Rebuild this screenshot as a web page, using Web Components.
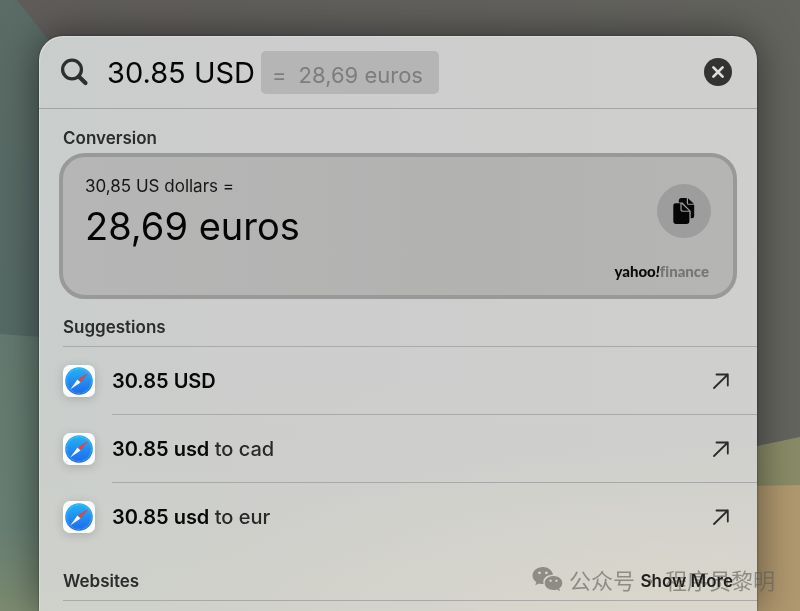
<!DOCTYPE html>
<html lang="en">
<head>
<meta charset="utf-8">
<meta name="viewport" content="width=device-width, initial-scale=1">
<title>Search</title>
<style>
  html, body { margin: 0; height: 100%; }
  body { font-family: Inter, "Noto Sans CJK SC", sans-serif; color: #1e1e1e; background: #55544f; overflow: hidden; }
</style>
</head>
<body>
<spot-desktop>
  <spot-panel>
    <search-bar slot="bar" value="30.85 USD" hint="28,69 euros"></search-bar>
    <section-title>Conversion</section-title>
    <conversion-card from="30,85 US dollars =" to="28,69 euros"></conversion-card>
    <section-title lined>Suggestions</section-title>
    <suggestion-row><b>30.85 USD</b></suggestion-row>
    <suggestion-row><b>30.85 usd</b> to cad</suggestion-row>
    <suggestion-row><b>30.85 usd</b> to eur</suggestion-row>
    <section-title lined action="Show More">Websites</section-title>
  </spot-panel>
  <channel-mark slot="mark"></channel-mark>
</spot-desktop>

<script>
const attach = (el, html) => { el.attachShadow({ mode: "open" }).innerHTML = html; };

customElements.define("spot-desktop", class extends HTMLElement {
  connectedCallback() {
    attach(this, `
      <style>
        :host { display: grid; position: relative; min-height: 100vh; box-sizing: border-box; padding: 36px 43px 0 39px; overflow: hidden; }
        .wall { position: absolute; inset: 0; width: 100%; height: 100%; }
      </style>
      <svg class="wall" viewBox="0 0 800 611" preserveAspectRatio="none" aria-hidden="true">
        <defs>
          <linearGradient id="grey" x1="0" x2="1"><stop offset="0" stop-color="#5f5c5a"/><stop offset="1" stop-color="#64645f"/></linearGradient>
          <linearGradient id="teal" x1="0" y1="0" x2="0" y2="1"><stop offset="0" stop-color="#5b6b65"/><stop offset="1" stop-color="#566a65"/></linearGradient>
          <linearGradient id="green" x1="0" y1="0" x2="0" y2="1"><stop offset="0" stop-color="#647a70"/><stop offset=".7" stop-color="#687f73"/><stop offset="1" stop-color="#7c8b70"/></linearGradient>
          <linearGradient id="olive" x1="0" y1="0" x2="0" y2="1"><stop offset="0" stop-color="#8a8c68"/><stop offset="1" stop-color="#898a63"/></linearGradient>
        </defs>
        <rect width="800" height="611" fill="url(#grey)"/>
        <path d="M0 0H17L80 80V340L0 335Z" fill="url(#teal)"/>
        <path d="M0 334L80 340V611H0Z" fill="url(#green)"/>
        <path d="M700 458L800 437V611H700Z" fill="url(#olive)"/>
        <path d="M700 487L800 485V611H700Z" fill="#b0986f"/>
      </svg>
      <slot></slot><slot name="mark"></slot>`);
  }
});

customElements.define("spot-panel", class extends HTMLElement {
  connectedCallback() {
    attach(this, `
      <style>
        :host { display: flex; flex-direction: column; position: relative; border-radius: 24px 24px 0 0; overflow: hidden;
          background: radial-gradient(ellipse 80% 34% at 95% 105%, rgba(218,214,204,.95) 20%, rgba(218,214,204,0) 100%),
            linear-gradient(to bottom, rgba(207,209,202,0) 60%, rgba(207,209,202,.9) 100%),
            linear-gradient(to right, #c9cecc 0, #cdcdcd 30%, #cfcfce 100%);
          box-shadow: 0 0 40px rgba(0,0,0,.5), 0 0 2px rgba(0,0,0,.5), inset 1px 1px 1px rgba(255,255,255,.3); }
        main { display: flex; flex-direction: column; padding-left: 24px; padding-top: 8px; }
      </style>
      <slot name="bar"></slot><main><slot></slot></main>`);
  }
});

customElements.define("search-bar", class extends HTMLElement {
  connectedCallback() {
    attach(this, `
      <style>
        :host { display: flex; align-items: center; height: 72px; padding: 0 24px 0 21px; border-bottom: 1px solid #a3a4a3; }
        .lens { width: 30px; height: 30px; flex: none; margin-right: 17px; }
        input { field-sizing: content; min-width: 0; border: 0; padding: 2px 0 0; margin: 0; outline: 0; background: none; font: 400 29px/40px Inter, sans-serif; color: #060606; }
        output { display: flex; gap: 12px; margin-left: 6px; padding: 4px 16px 0 11px; height: 39px; border-radius: 5px; background: #b4b5b4; color: #7c7d7c; font: 400 22px/40px Inter, sans-serif; white-space: pre; }
        button { margin-left: auto; border: 0; padding: 0; width: 30px; height: 30px; background: none; flex: none; }
        button svg { display: block; }
      </style>
      <svg class="lens" viewBox="0 0 30 30" fill="none" stroke="#2e3030" aria-hidden="true"><circle cx="12" cy="12.500" r="9.400" stroke-width="3.300"/><path d="M18.800 19.500L25.500 26" stroke-width="4.200" stroke-linecap="round"/></svg>
      <input type="text" aria-label="Search" spellcheck="false">
      <output><span>=</span><span>${this.getAttribute("hint")}</span></output>
      <button type="button" aria-label="Clear search"><svg width="30" height="30" viewBox="0 0 30 30" aria-hidden="true"><circle cx="15" cy="15" r="14" fill="#333332"/><path d="M10.400 10.400L19.600 19.600M19.600 10.400L10.400 19.600" stroke="#dededc" stroke-width="2.700" stroke-linecap="round"/></svg></button>`);
    this.shadowRoot.querySelector("input").value = this.getAttribute("value");
  }
});

customElements.define("section-title", class extends HTMLElement {
  connectedCallback() {
    const action = this.getAttribute("action");
    attach(this, `
      <style>
        :host { display: flex; align-items: center; justify-content: space-between; box-sizing: border-box; height: 36px; padding-top: 6px; padding-right: 24px; }
        :host([lined]) { height: 48px; padding-top: 8px; border-bottom: 1px solid #a9aaa8; }
        :host([action]) { height: 50px; padding-top: 10px; }
        h2, button { margin: 0; font: 600 17px/24px Inter, sans-serif; color: #2b2c2c; }
        button { border: 0; padding: 0; background: none; color: #1f1f1d; }
      </style>
      <h2><slot></slot></h2>${action ? `<button type="button">${action}</button>` : ""}`);
  }
});

customElements.define("conversion-card", class extends HTMLElement {
  connectedCallback() {
    attach(this, `
      <style>
        :host { display: flex; justify-content: space-between; box-sizing: border-box; min-height: 146px; margin: 0 20px 0 -4px; padding: 17px 22px 15px; border: 4px solid #989998; border-radius: 26px; background: linear-gradient(to right, #b5b6b5, #b2b2b1 60%, #b5b5b4); }
        p { margin: 0; color: #161616; font-size: 17px; line-height: 24px; }
        p + p { color: #050505; font-size: 38px; line-height: 56px; }
        .side { display: flex; flex-direction: column; align-items: flex-end; justify-content: space-between; padding-top: 10px; }
        button { width: 54px; height: 54px; border: 0; border-radius: 50%; padding: 0; background: #9c9d9c; display: grid; place-items: center; }
        a { font: 900 15px/18px Lato, sans-serif; color: #0b0b0b; text-decoration: none; display: flex; padding-right: 2px; }
        i { font-weight: 900; } span { color: #747574; font-variant-ligatures: none; }
      </style>
      <div><p>${this.getAttribute("from")}</p><p>${this.getAttribute("to")}</p></div>
      <div class="side">
        <button type="button" aria-label="Copy"><svg width="26" height="28" viewBox="0 0 26 28" aria-hidden="true">
          <path d="M10 1H15.800V6.300Q15.800 7.800 17.300 7.800H23.200V19Q23.200 21.300 21 21.300H19.700V14L11.500 5.500H7.800V3.500Q7.800 1 10 1Z" fill="#060606"/>
          <path d="M17 1.200L22.900 6.700H17Z" fill="#060606"/>
          <path d="M4.500 6.200H9.400V12.800Q9.400 14.800 11.500 14.800H18.400V24Q18.400 27 15.500 27H5.200Q2.300 27 2.300 24V8.500Q2.300 6.200 4.500 6.200Z" fill="#060606"/>
          <path d="M10.600 6.700L18 13.700H12Q10.600 13.700 10.600 12.300Z" fill="#060606"/>
        </svg></button>
        <a href="#finance">yahoo<i>!</i><span>finance</span></a>
      </div>`);
  }
});

customElements.define("suggestion-row", class extends HTMLElement {
  connectedCallback() {
    attach(this, `
      <style>
        :host { display: flex; }
        a { flex: 1; display: flex; align-items: center; color: #292929; text-decoration: none; }
        .app { width: 32px; height: 32px; margin-right: 17px; flex: none; overflow: visible; filter: drop-shadow(0 2px 5px rgba(0,0,0,.16)); }
        .text { flex: 1; display: flex; align-items: center; justify-content: space-between; height: 67px; padding-right: 28px; border-bottom: 1px solid #a9aaa8; font: 500 20px/28px Inter, sans-serif; }
        :host(:nth-of-type(3)) .text { border-bottom-color: transparent; }
        ::slotted(b) { font-weight: 600; color: #080808; }
      </style>
      <a href="#search">
        <svg class="app" viewBox="0 0 32 32" aria-hidden="true">
          <defs><linearGradient id="sea" x1="0" y1="0" x2="0" y2="1"><stop offset="0" stop-color="#22b6f3"/><stop offset="1" stop-color="#1d67ee"/></linearGradient></defs>
          <rect width="32" height="32" rx="7" fill="#fdfdfd"/>
          <circle cx="16" cy="16" r="13.800" fill="url(#sea)"/>
          <circle cx="16" cy="16" r="12.300" fill="none" stroke="#9adcff" stroke-opacity=".45" stroke-width="1.300" stroke-dasharray=".6 .7"/>
          <path d="M25 8L17.500 17.600L14.500 14.400Z" fill="#e5443d"/>
          <path d="M7.200 24.400L14.500 14.400L17.500 17.600Z" fill="#f7f9fb"/>
        </svg>
        <span class="text"><span><slot></slot></span>
          <svg width="16" height="16" viewBox="0 0 16 16" fill="none" stroke="#2b2b2a" stroke-width="1.800" stroke-linecap="round" stroke-linejoin="round" aria-hidden="true"><path d="M1 15L14.800 1.500M3.500 1.500H14.800V12.500"/></svg>
        </span>
      </a>`);
  }
});

customElements.define("channel-mark", class extends HTMLElement {
  connectedCallback() {
    attach(this, `
      <style>
        :host { position: absolute; right: 25px; bottom: 16px; display: flex; align-items: center; color: #5c5b55; opacity: .6; mix-blend-mode: darken; font: 400 22px/32px "Noto Sans CJK SC", sans-serif; pointer-events: none; }
        svg { display: block; margin-right: 6px; }
        .dot { margin: 0 4px; }
      </style>
      <svg width="31" height="26" viewBox="0 0 31 26" aria-hidden="true">
        <path fill="currentColor" fill-rule="evenodd" d="M11 1C5 1 .5 4.800 .5 9.500C.5 12.300 2 14.600 4.300 16.200L3.300 19.300L7 17.400Q9 18 11.600 18C10.200 12.500 14.600 8.500 21 8.700C20.200 4.300 16 1 11 1ZM7.500 5.400A1.400 1.400 0 1 1 7.490 5.400ZM14.400 5.400A1.400 1.400 0 1 1 14.390 5.400Z"/>
        <path fill="currentColor" fill-rule="evenodd" d="M21.500 10C16.400 10 12.700 13.200 12.700 17S16.400 24 21.500 24Q23.300 24 24.800 23.400L28 25L27.200 22.300C29.200 21 30.300 19.200 30.300 17C30.300 13.200 26.600 10 21.500 10ZM18.600 13.500A1.200 1.200 0 1 1 18.590 13.500ZM24.400 13.500A1.200 1.200 0 1 1 24.390 13.500Z"/>
      </svg>
      <span>公众号</span><span class="dot">·</span><span>程序员黎明</span>`);
  }
});
</script>
</body>
</html>
